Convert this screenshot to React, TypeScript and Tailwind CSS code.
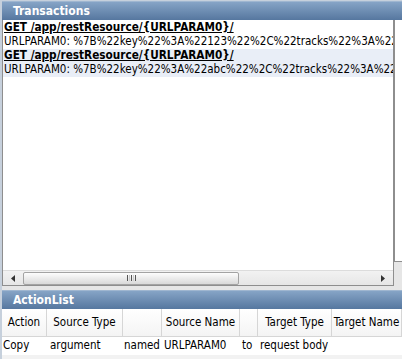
import React from "react";

const F = "[font-family:'DejaVu_Sans_Condensed','DejaVu_Sans',sans-serif]";

function Header({ title }: { title: string }) {
  return (
    <div className="h-[19px] bg-gradient-to-b from-[#86a4c6] to-[#56779f] flex items-center pl-[11px] border-t border-[#9fb6d0]">
      <span className="text-white font-bold text-[12px] leading-none">{title}</span>
    </div>
  );
}

function Row({ text, bold, bg }: { text: string; bold?: boolean; bg?: string }) {
  return (
    <div className={`h-[14px] pl-[1px] flex items-center whitespace-nowrap overflow-hidden leading-none text-black ${bold ? "font-bold underline text-[11.7px]" : "text-[11.5px]"} ${bg ?? ""}`}>
      {text}
    </div>
  );
}

export default function App() {
  const cols = [
    { w: "w-[45px]", h: "Action", d: "Copy", pl: "pl-[1px]" },
    { w: "w-[76px]", h: "Source Type", d: "argument", pl: "pl-[3px]" },
    { w: "w-[39px]", h: "", d: "named", pl: "pl-[1px]" },
    { w: "w-[78px]", h: "Source Name", d: "URLPARAM0", pl: "pl-[2px]" },
    { w: "w-[18px]", h: "", d: "to", pl: "pl-[2px]" },
    { w: "w-[74px]", h: "Target Type", d: "request body", pl: "pl-[2px]" },
    { w: "flex-1", h: "Target Name", d: "", pl: "pl-[2px]" },
  ];
  return (
    <div className={`w-[402px] h-[359px] overflow-hidden bg-[#c6d0dc] pl-[2px] pt-[1px] flex flex-col ${F}`}>
      <div className="flex h-[285px] shrink-0 bg-[#e6e6e6]">
        <div className="w-[392px] flex flex-col">
          <Header title="Transactions" />
          <div className="flex-1 bg-white border border-t-0 border-[#8e8e8e] flex flex-col">
            <div className="flex-1 pt-[1px]">
              <Row text="GET /app/restResource/{URLPARAM0}/" bold />
              <Row text="URLPARAM0: %7B%22key%22%3A%22123%22%2C%22tracks%22%3A%221%22%7D" />
              <Row text="GET /app/restResource/{URLPARAM0}/" bold bg="bg-[#e9eef7]" />
              <Row text="URLPARAM0: %7B%22key%22%3A%22abc%22%2C%22tracks%22%3A%221%22%7D" bg="bg-[#e9eef7]" />
            </div>
            <div className="h-[15px] bg-gradient-to-b from-[#f2f2f2] to-[#e6e6e6] border-t border-[#dcdcdc] flex items-center">
              <div className="w-[20px] flex justify-center">
                <svg width="4" height="7" viewBox="0 0 4 7"><path d="M4 0 L0 3.5 L4 7 Z" fill="#333" /></svg>
              </div>
              <div className="w-[216px] h-[13px] rounded-[2px] border border-[#a3a3a3] bg-gradient-to-b from-[#fdfdfd] to-[#d9d9d9] flex items-center justify-center gap-[1px]">
                <div className="w-[1px] h-[6px] bg-[#555]" />
                <div className="w-[1px] h-[6px] bg-[#ccc]" />
                <div className="w-[1px] h-[6px] bg-[#555]" />
                <div className="w-[1px] h-[6px] bg-[#ccc]" />
                <div className="w-[1px] h-[6px] bg-[#555]" />
              </div>
              <div className="flex-1" />
              <div className="w-[20px] flex justify-center">
                <svg width="4" height="7" viewBox="0 0 4 7"><path d="M0 0 L4 3.5 L0 7 Z" fill="#333" /></svg>
              </div>
            </div>
          </div>
        </div>
        <div className="w-[3px]" />
        <div className="flex-1 flex flex-col">
          <Header title="" />
          <div className="h-[242px] bg-white border-l border-b border-[#8e8e8e]" />
        </div>
      </div>
      <div className="h-[4px] shrink-0 bg-[#e6e6e6]" />
      <Header title="ActionList" />
      <div className="flex-1 bg-[#f2f2f2] flex flex-col">
        <div className="h-[28px] flex bg-gradient-to-b from-white to-[#f4f4f4] border-b border-[#d6d6d6]">
          {cols.map((c, i) => (
            <div key={i} className={`${c.w} h-full flex items-center justify-center text-[11.5px] leading-none text-black whitespace-nowrap border-r border-[#d6d6d6] overflow-hidden`}>
              {c.h}
            </div>
          ))}
        </div>
        <div className="h-[18px] flex bg-white">
          {cols.map((c, i) => (
            <div key={i} className={`${c.w} ${c.pl} h-full flex items-center text-[11.5px] leading-none text-black whitespace-nowrap overflow-hidden`}>
              {c.d}
            </div>
          ))}
        </div>
      </div>
    </div>
  );
}
